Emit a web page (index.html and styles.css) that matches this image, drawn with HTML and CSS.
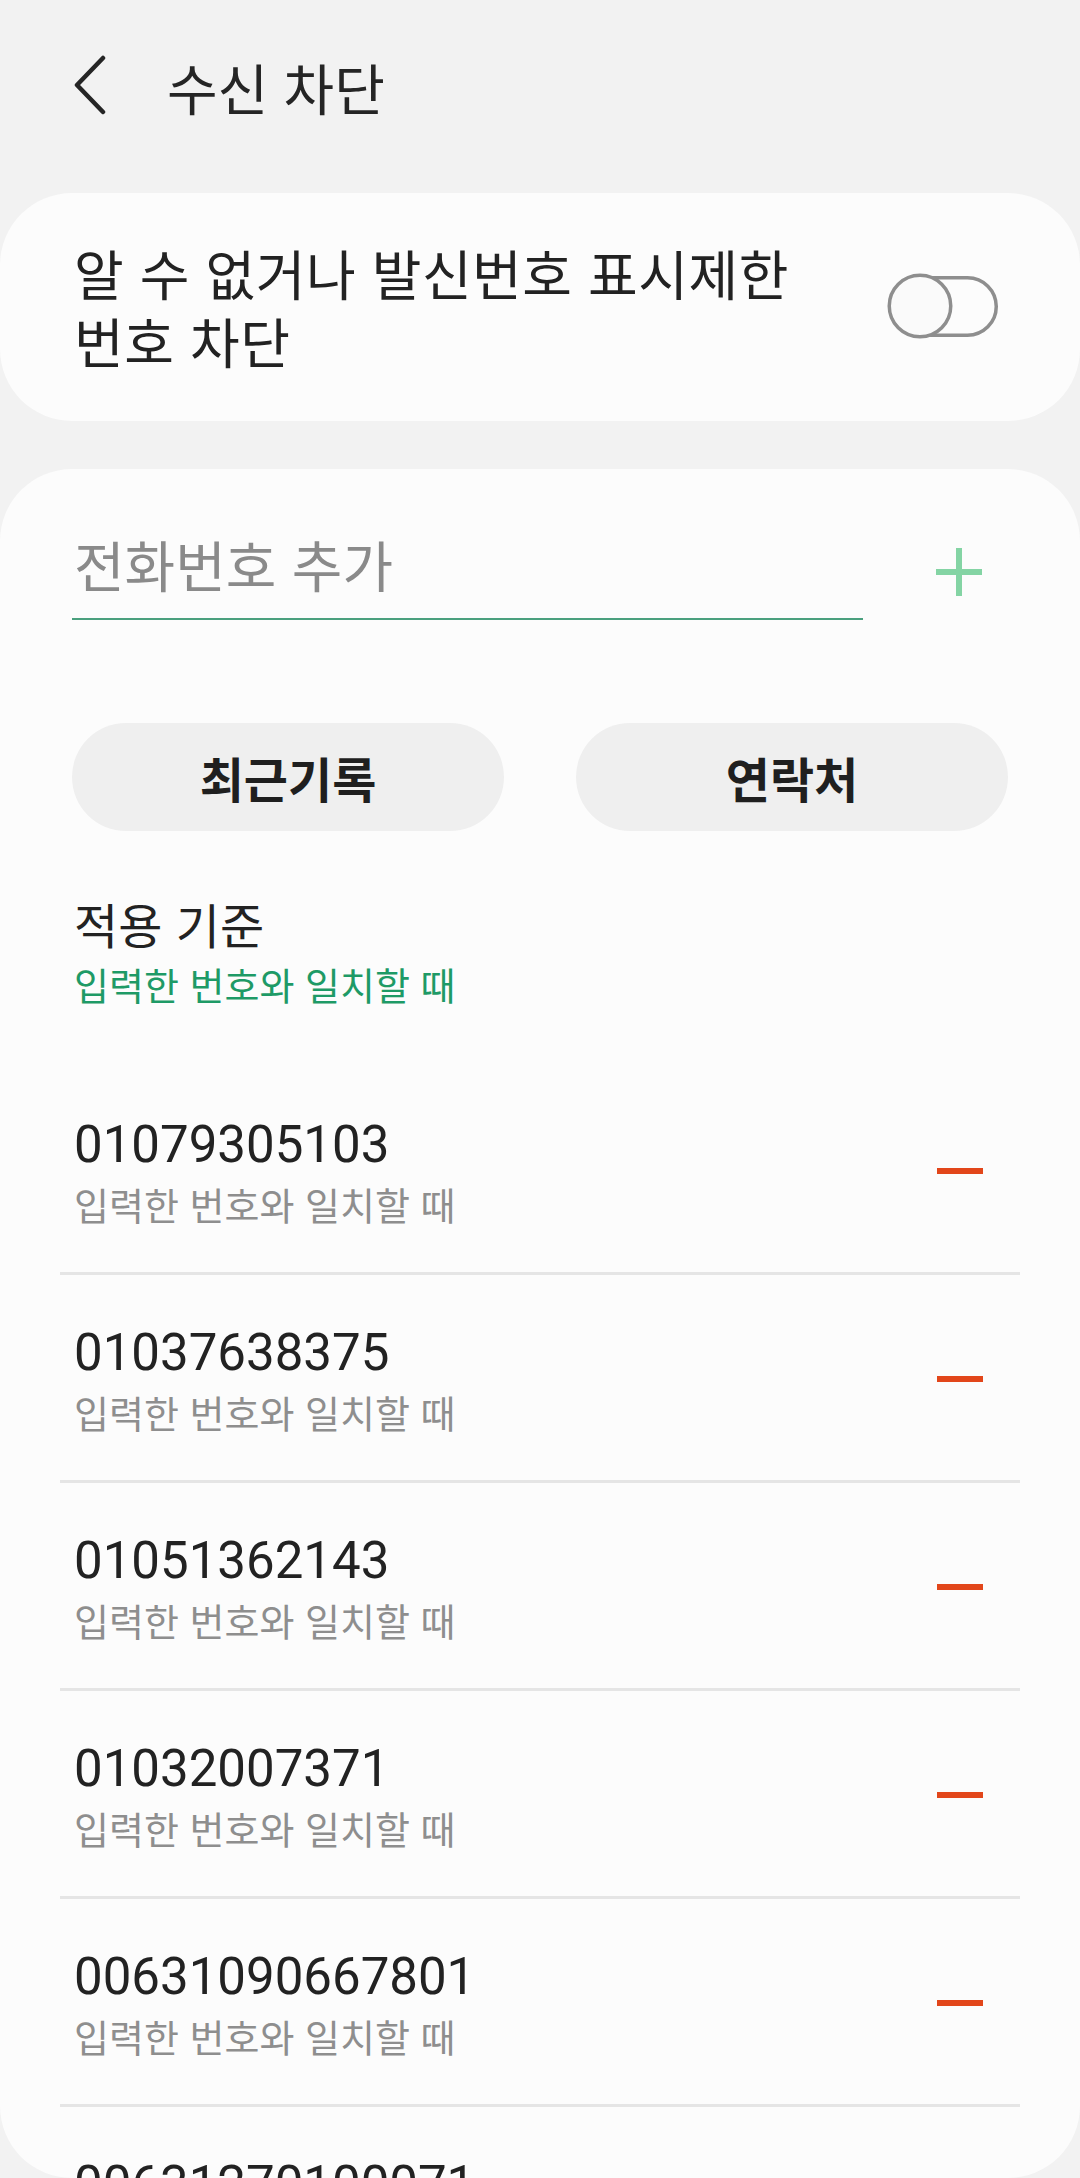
FILE: index.html
```html
<!DOCTYPE html>
<html lang="ko">
<head>
  <meta charset="UTF-8" />
  <meta name="viewport" content="width=device-width, initial-scale=1.0"/>
  <title>수신 차단</title>
  <link rel="stylesheet" href="styles.css">
</head>
<body>
  <div class="screen">
    <!-- Header -->
    <header class="top-bar">
      <svg class="back" width="34" height="60" viewBox="0 0 34 60">
        <path d="M29 3 L3 30 L29 57" fill="none" stroke="#252525" stroke-width="4.5" stroke-linecap="round" stroke-linejoin="round"/>
      </svg>
      <h1>수신 차단</h1>
    </header>

    <!-- Unknown numbers toggle -->
    <section class="card toggle-card">
      <div class="toggle-label">알 수 없거나 발신번호 표시제한 번호 차단</div>
      <svg class="switch" width="114" height="70" viewBox="0 0 114 70">
        <rect x="7.75" y="5.75" width="102.5" height="57.5" rx="28.75" fill="none" stroke="#8e8e8e" stroke-width="3.5"/>
        <circle cx="34" cy="34" r="30.75" fill="#fafafa" stroke="#8e8e8e" stroke-width="3.5"/>
      </svg>
    </section>

    <!-- Blocked numbers -->
    <section class="card list-card">
      <div class="add-row">
        <div class="field">전화번호 추가</div>
        <svg class="add-btn" width="48" height="48" viewBox="0 0 48 48">
          <path d="M24 0 V48 M1 24 H47" stroke="#84d4a4" stroke-width="6"/>
        </svg>
      </div>

      <div class="pick-row">
        <button type="button">최근기록</button>
        <button type="button">연락처</button>
      </div>

      <div class="rule">
        <div class="rule-title">적용 기준</div>
        <div class="rule-value">입력한 번호와 일치할 때</div>
      </div>

      <ul class="blocked">
        <li>
          <div class="info">
            <div class="number">01079305103</div>
            <div class="match">입력한 번호와 일치할 때</div>
          </div>
          <span class="remove"></span>
        </li>
        <li>
          <div class="info">
            <div class="number">01037638375</div>
            <div class="match">입력한 번호와 일치할 때</div>
          </div>
          <span class="remove"></span>
        </li>
        <li>
          <div class="info">
            <div class="number">01051362143</div>
            <div class="match">입력한 번호와 일치할 때</div>
          </div>
          <span class="remove"></span>
        </li>
        <li>
          <div class="info">
            <div class="number">01032007371</div>
            <div class="match">입력한 번호와 일치할 때</div>
          </div>
          <span class="remove"></span>
        </li>
        <li>
          <div class="info">
            <div class="number">00631090667801</div>
            <div class="match">입력한 번호와 일치할 때</div>
          </div>
          <span class="remove"></span>
        </li>
        <li>
          <div class="info">
            <div class="number">00631270100071</div>
            <div class="match">입력한 번호와 일치할 때</div>
          </div>
          <span class="remove"></span>
        </li>
      </ul>
    </section>
  </div>
</body>
</html>
```

FILE: styles.css
```css
body {
  margin: 0;
  font-family: "Noto Sans CJK KR", "Noto Sans", sans-serif;
  background: #f2f2f2;
  color: #222;
  overflow: hidden;
}

.screen {
  width: 1080px;
  height: 2178px;
  overflow: hidden;
}

/* Header */
.top-bar {
  height: 172px;
  display: flex;
  align-items: center;
  padding-left: 74px;
}

.top-bar .back {
  display: block;
  margin-top: -2px;
}

.top-bar h1 {
  margin: 0 0 0 59px;
  font-size: 55px;
  font-weight: 400;
  color: #252525;
  line-height: 68px;
}

/* Cards */
.card {
  background: #fcfcfc;
  border-radius: 72px;
}

.toggle-card {
  margin-top: 21px;
  height: 228px;
  box-sizing: border-box;
  padding: 0 80px 0 74px;
  display: flex;
  align-items: center;
  justify-content: space-between;
}

.toggle-label {
  max-width: 770px;
  font-size: 54px;
  letter-spacing: 0.5px;
  line-height: 68px;
  color: #222;
}

.switch {
  display: block;
}

.list-card {
  margin-top: 48px;
  height: 1709px;
  overflow: hidden;
}

/* Add number */
.add-row {
  display: flex;
  align-items: flex-start;
  padding: 59px 0 0 72px;
}

.field {
  width: 789px;
  padding: 0 0 20px 2px;
  font-size: 55px;
  line-height: 70px;
  color: #8a8a8a;
  border-bottom: 2.5px solid #4aa07e;
}

.add-btn {
  display: block;
  margin: 20px 0 0 72px;
}

/* Recent / contacts */
.pick-row {
  display: flex;
  gap: 72px;
  padding: 0 72px;
  margin-top: 103px;
}

.pick-row button {
  width: 432px;
  height: 108px;
  border: none;
  border-radius: 54px;
  background: #efefef;
  font-family: inherit;
  font-size: 48px;
  font-weight: 700;
  color: #1f1f1f;
  padding: 0;
}

/* Match rule */
.rule {
  padding-left: 74px;
  margin-top: 64px;
  margin-bottom: 60px;
}

.rule-title {
  font-size: 48px;
  line-height: 56px;
  color: #222;
}

.rule-value {
  margin-top: 10px;
  font-size: 38px;
  line-height: 46px;
  color: #1e9a66;
}

/* Blocked list */
.blocked {
  list-style: none;
  margin: 0;
  padding: 0;
}

.blocked li {
  margin: 0 60px;
  padding: 48px 37px 45px 14px;
  border-bottom: 3px solid #e5e5e5;
  display: flex;
  align-items: center;
  justify-content: space-between;
}

.number {
  font-family: Roboto, "Noto Sans CJK KR", sans-serif;
  font-size: 51px;
  line-height: 60px;
  color: #222;
}

.match {
  margin-top: 6px;
  font-size: 38px;
  line-height: 46px;
  color: #8e8e8e;
}

.remove {
  display: block;
  width: 46px;
  height: 6px;
  background: #e2461a;
}
```
